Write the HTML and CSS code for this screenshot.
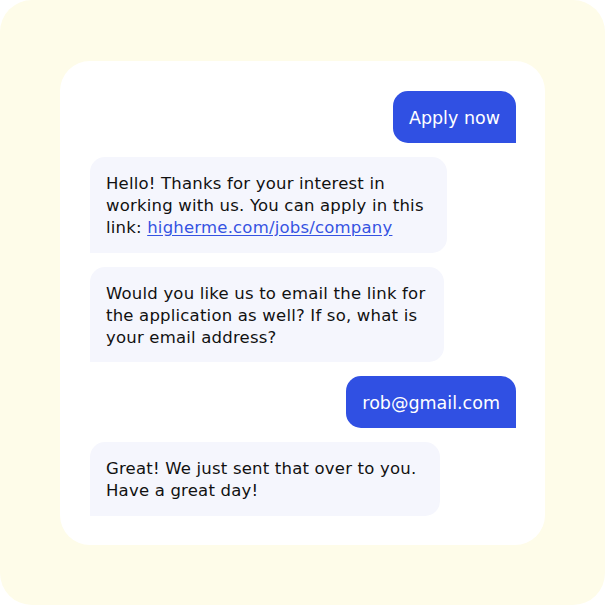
FILE: index.html
```html
<!DOCTYPE html>
<html>
<head>
<meta charset="utf-8">
<link rel="stylesheet" href="styles.css">
</head>
<body>
<div class="frame">
  <div class="card">
    <div class="msg out">Apply now</div>
    <div class="msg in w1">Hello! Thanks for your interest in<br>working with us. You can apply in this<br>link: <a class="link" href="#">higherme.com/jobs/company</a></div>
    <div class="msg in w2">Would you like us to email the link for<br>the application as well? If so, what is<br>your email address?</div>
    <div class="msg out">rob@gmail.com</div>
    <div class="msg in w3">Great! We just sent that over to you.<br>Have a great day!</div>
  </div>
</div>
</body>
</html>
```
FILE: styles.css
```css
html, body {
  margin: 0;
  padding: 0;
  background: #ffffff;
}
.frame {
  width: 605px;
  height: 605px;
  box-sizing: border-box;
  padding: 61px 60px 60px 60px;
  background: #fefce9;
  border-radius: 32px;
}
.card {
  height: 100%;
  box-sizing: border-box;
  background: #ffffff;
  border-radius: 30px;
  padding: 30px;
  display: flex;
  flex-direction: column;
  align-items: flex-start;
  gap: 14px;
  font-family: "DejaVu Sans", "Liberation Sans", sans-serif;
}
.msg {
  box-sizing: border-box;
  padding: 16px 16px 14px 16px;
  font-size: 16.5px;
  letter-spacing: 0.2px;
  line-height: 22px;
  color: #111111;
  white-space: nowrap;
  flex: none;
}
.out {
  align-self: flex-end;
  margin-right: -1px;
  height: 52px;
  background: #3050e3;
  color: #ffffff;
  font-size: 17.5px;
  letter-spacing: 0;
  border-radius: 15px 15px 0 15px;
}
.in {
  background: #f5f6fd;
  border-radius: 15px 15px 15px 0;
}
.w1 { width: 357px; height: 96px; }
.w2 { width: 354px; height: 95px; }
.w3 { width: 350px; height: 74px; }
.link {
  color: #3553e2;
  text-decoration: underline;
  text-underline-offset: 2px;
}
```
